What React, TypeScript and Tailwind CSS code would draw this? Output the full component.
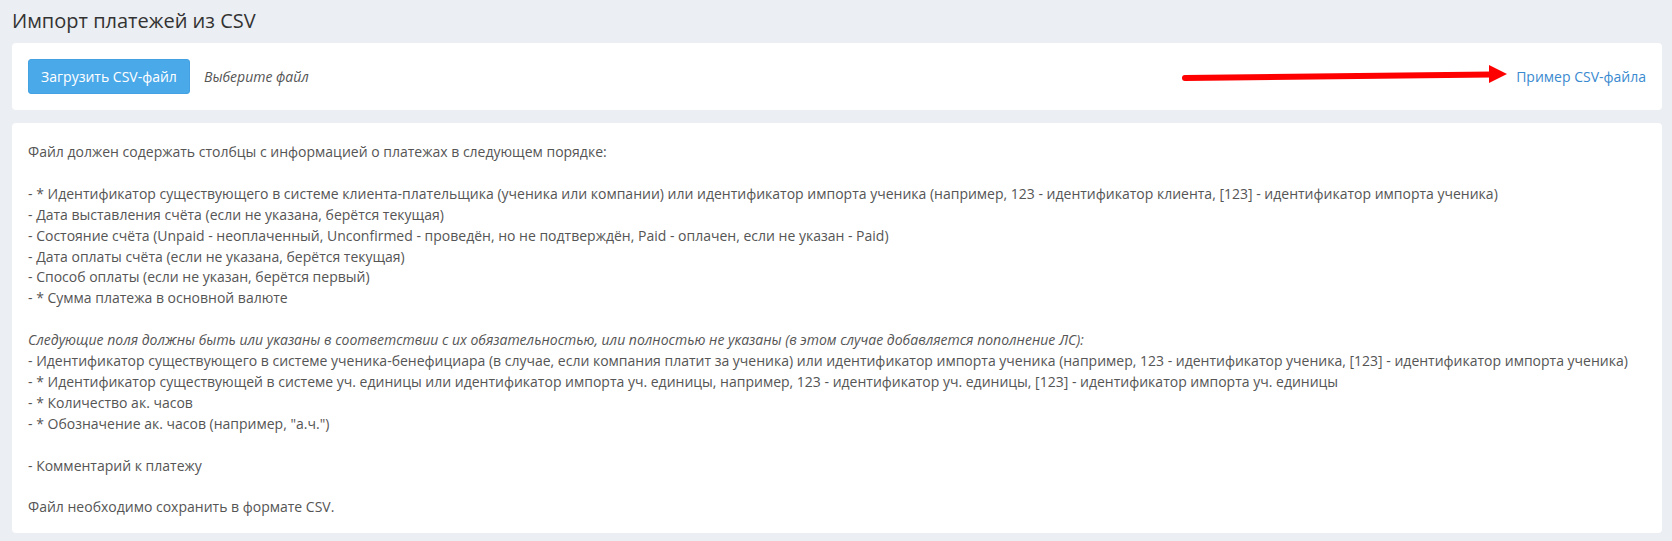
import React from "react";

const lines: { text: string; italic?: boolean }[] = [
  { text: "Файл должен содержать столбцы с информацией о платежах в следующем порядке:" },
  { text: "" },
  {
    text:
      "- * Идентификатор существующего в системе клиента-плательщика (ученика или компании) или идентификатор импорта ученика (например, 123 - идентификатор клиента, [123] - идентификатор импорта ученика)",
  },
  { text: "- Дата выставления счёта (если не указана, берётся текущая)" },
  {
    text:
      "- Состояние счёта (Unpaid - неоплаченный, Unconfirmed - проведён, но не подтверждён, Paid - оплачен, если не указан - Paid)",
  },
  { text: "- Дата оплаты счёта (если не указана, берётся текущая)" },
  { text: "- Способ оплаты (если не указан, берётся первый)" },
  { text: "- * Сумма платежа в основной валюте" },
  { text: "" },
  {
    text:
      "Следующие поля должны быть или указаны в соответствии с их обязательностью, или полностью не указаны (в этом случае добавляется пополнение ЛС):",
    italic: true,
  },
  {
    text:
      "- Идентификатор существующего в системе ученика-бенефициара (в случае, если компания платит за ученика) или идентификатор импорта ученика (например, 123 - идентификатор ученика, [123] - идентификатор импорта ученика)",
  },
  {
    text:
      "- * Идентификатор существующей в системе уч. единицы или идентификатор импорта уч. единицы, например, 123 - идентификатор уч. единицы, [123] - идентификатор импорта уч. единицы",
  },
  { text: "- * Количество ак. часов" },
  { text: '- * Обозначение ак. часов (например, "а.ч.")' },
  { text: "" },
  { text: "- Комментарий к платежу" },
  { text: "" },
  { text: "Файл необходимо сохранить в формате CSV." },
];

// red annotation arrow pointing at the sample link
function RedArrow() {
  return (
    <svg
      className="pointer-events-none absolute left-[1161px] top-[22px]"
      width="340"
      height="24"
      viewBox="0 0 340 24"
    >
      <path d="M12 13 L318 9.5" stroke="#ff0000" strokeWidth="6" strokeLinecap="round" fill="none" />
      <path d="M316 0 L334 9 L316 18 Z" fill="#ff0000" />
    </svg>
  );
}

export default function App() {
  return (
    <div
      className="min-h-screen bg-[#ebeef2] pl-3 pr-[10px] pt-[7px] pb-2"
      style={{ fontFamily: '"Open Sans", "Liberation Sans", sans-serif' }}
    >
      <h1 className="mb-2 text-[20px] leading-[28px] text-[#333333]">Импорт платежей из CSV</h1>

      <div className="relative flex items-center rounded-[4px] bg-white p-4">
        <button
          type="button"
          className="flex h-[35px] w-[162px] items-center justify-center rounded-[3px] border border-[#45a2e2] bg-[#4aa9e9] text-[14px] text-white"
        >
          Загрузить CSV-файл
        </button>
        <span className="ml-[14px] text-[14px] italic text-[#555555]">Выберите файл</span>
        <a href="#" className="ml-auto text-[14px] text-[#3a8ad0]">
          Пример CSV-файла
        </a>
        <RedArrow />
      </div>

      <div className="mt-[13px] rounded-[4px] bg-white px-4 pt-[19px] pb-[15px] text-[14px] leading-[20.9px] text-[#555555]">
        {lines.map((l, i) => (
          <div key={i} className={l.italic ? "italic" : ""}>
            {l.text === "" ? "\u00a0" : l.text}
          </div>
        ))}
      </div>
    </div>
  );
}
